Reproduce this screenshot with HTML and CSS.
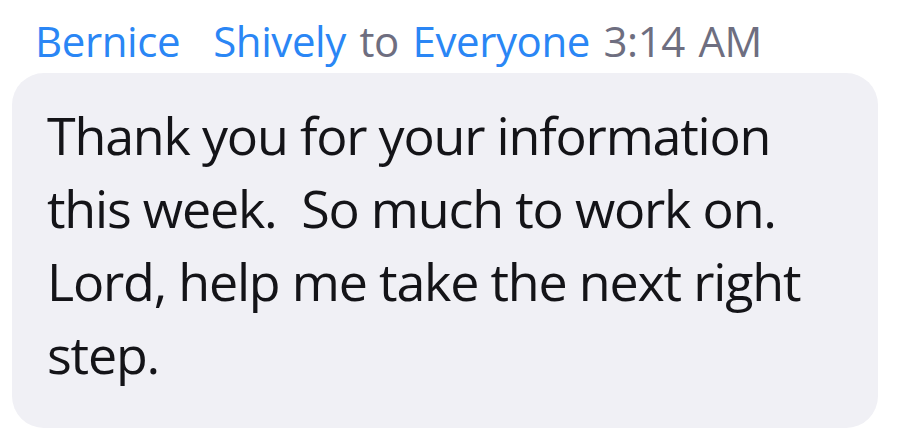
FILE: index.html
```html
<!DOCTYPE html>
<html>
<head>
<meta charset="utf-8">
<link rel="stylesheet" href="styles.css">
</head>
<body>
<div class="chat">
  <div class="meta">
    <span class="name first">Bernice</span><span class="name">Shively</span>
    <span class="to">to</span>
    <span class="name">Everyone</span>
    <span class="time">3:14 AM</span>
  </div>
  <div class="bubble">
    <p class="msg">Thank you for your information<br>this week.&nbsp; So much to work on.<br>Lord, help me take the next right<br>step.</p>
  </div>
</div>
</body>
</html>
```
FILE: styles.css
```css
html, body {
  margin: 0;
  padding: 0;
  background: #ffffff;
}
.chat {
  width: 909px;
  height: 446px;
  font-family: "Open Sans", "Noto Sans", sans-serif;
}
.meta {
  padding: 13px 0 0 35px;
  height: 73px;
  box-sizing: border-box;
  font-size: 42px;
  line-height: 56px;
  white-space: nowrap;
  color: #6e6e80;
  letter-spacing: -0.4px;
  word-spacing: 3px;
}
.name {
  color: #2a86f5;
}
.name.first {
  margin-right: 33px;
}
.bubble {
  margin: 0 0 0 12px;
  width: 866px;
  height: 355px;
  box-sizing: border-box;
  background: #f0f0f5;
  border-radius: 32px;
  padding: 25px 0 0 35px;
}
.msg {
  margin: 0;
  font-size: 52px;
  line-height: 73px;
  color: #141418;
  letter-spacing: -1.2px;
}
```
